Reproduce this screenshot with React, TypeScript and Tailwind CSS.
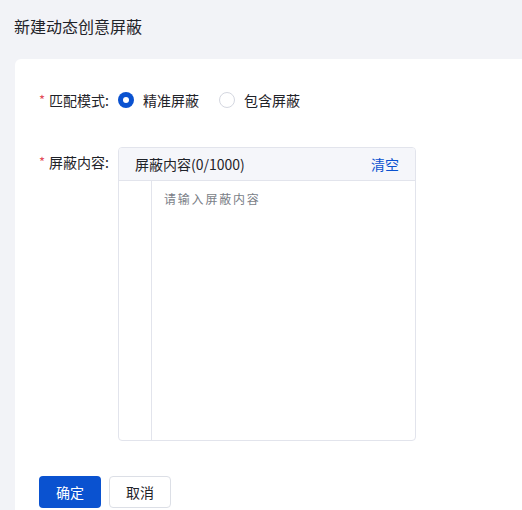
import React from "react";

const font = { fontFamily: '"Noto Sans CJK SC", "Noto Sans", sans-serif' };

function Radio({ checked, label }: { checked: boolean; label: string }) {
  return (
    <label className="flex items-center gap-[9px] cursor-pointer">
      {checked ? (
        <span className="w-4 h-4 rounded-full bg-[#0a52d0] flex items-center justify-center">
          <span className="w-[6px] h-[6px] rounded-full bg-white" />
        </span>
      ) : (
        <span className="w-4 h-4 rounded-full border border-[#d4d7e0] bg-white" />
      )}
      <span className="text-[14px] text-[#1f2329]">{label}</span>
    </label>
  );
}

export default function App() {
  return (
    <div className="w-[522px] h-[510px] bg-[#f2f3f7] overflow-hidden" style={font}>
      <div className="h-[59px] pl-[14px] flex items-center pb-[10px]">
        <h1 className="text-[16px] text-[#1f2329] font-normal pt-[2px]">新建动态创意屏蔽</h1>
      </div>
      <div className="ml-[15px] bg-white rounded-tl-[6px] h-[451px] pl-[24px] pt-[30px]">
        <div className="flex items-center h-[22px]">
          <div className="w-[79px] flex items-center text-[14px] text-[#1f2329]">
            <span className="text-[#e34d59] mr-[4px] text-[13px]">*</span>
            <span>匹配模式:</span>
          </div>
          <div className="flex items-center gap-[20px]">
            <Radio checked label="精准屏蔽" />
            <Radio checked={false} label="包含屏蔽" />
          </div>
        </div>
        <div className="flex mt-[36px]">
          <div className="w-[79px] flex items-start text-[14px] text-[#1f2329] pt-[5px]">
            <span className="text-[#e34d59] mr-[4px] text-[13px]">*</span>
            <span>屏蔽内容:</span>
          </div>
          <div className="w-[298px] h-[294px] border border-[#e2e4ec] rounded-[4px] flex flex-col overflow-hidden">
            <div className="h-[33px] bg-[#f5f6fa] border-b border-[#e2e4ec] flex items-center justify-between px-[16px] text-[14px]">
              <span className="text-[#1f2329]">屏蔽内容(0/1000)</span>
              <button className="text-[#0a52d0]">清空</button>
            </div>
            <div className="flex flex-1">
              <div className="w-[33px] border-r border-[#e2e4ec]" />
              <div className="flex-1 pl-[12px] pt-[9px] text-[12px] text-[#7a7e87] tracking-[1.8px]">
                请输入屏蔽内容
              </div>
            </div>
          </div>
        </div>
        <div className="flex gap-[8px] mt-[35px]">
          <button className="w-[62px] h-[32px] rounded-[4px] bg-[#0a52d0] text-white text-[14px]">确定</button>
          <button className="w-[62px] h-[32px] rounded-[4px] border border-[#dcdfe6] bg-white text-[#1f2329] text-[14px]">取消</button>
        </div>
      </div>
    </div>
  );
}
